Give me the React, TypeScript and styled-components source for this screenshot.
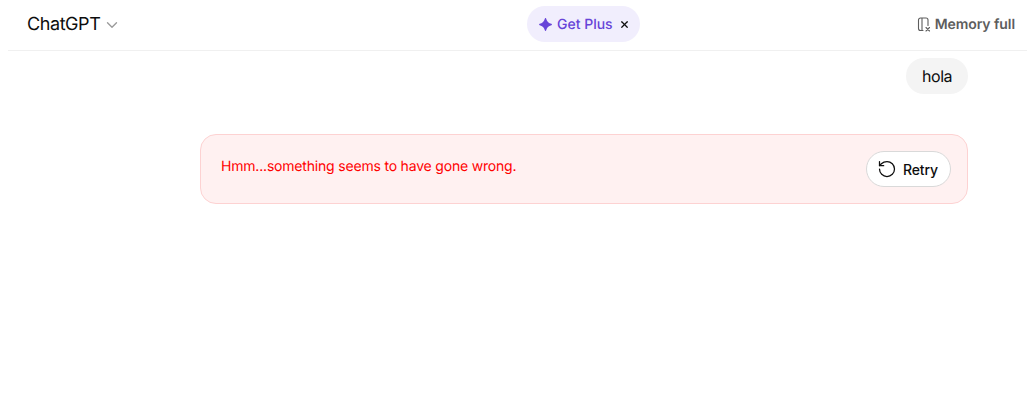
import React from 'react'
import styled, { createGlobalStyle } from 'styled-components'
import { ChevronDown, RotateCcw, X } from 'lucide-react'

const GlobalStyle = createGlobalStyle`
html, body {
  margin: 0;
  padding: 0;
  background: #ffffff;
  font-family: Inter, "Liberation Sans", sans-serif;
  text-rendering: geometricPrecision;
}
`

const App = () => {
  return (
    <Page>
      <GlobalStyle />
      <Header>
        <ModelButton>
          <ModelName>ChatGPT</ModelName>
          <ChevronDown size={18} color="#9b9b9b" strokeWidth={1.8} />
        </ModelButton>
        <PlusPill>
          <svg width="13" height="13" viewBox="0 0 13 13" aria-hidden="true">
            <path
              d="M6.500 .8c.7 3 2 4.700 5.700 5.700-3.700 1-5 2.700-5.700 5.700-.7-3-2-4.700-5.700-5.700 3.700-1 5-2.700 5.700-5.700z"
              fill="#6744d8"
              stroke="#6744d8"
              strokeWidth="1.400"
              strokeLinejoin="round"
            />
          </svg>
          <PlusLabel>Get Plus</PlusLabel>
          <CloseIcon size={11} strokeWidth={2.6} color="#0d0d0d" />
        </PlusPill>
        <MemoryStatus>
          <svg width="14" height="15" viewBox="0 0 14 15" fill="none" aria-hidden="true">
            <path
              d="M6 13.500H3.500a2 2 0 0 1-2-2V3a2 2 0 0 1 2-2h5.500a2 2 0 0 1 2 2v5.500M5 1v12.500"
              stroke="#5d5d5d"
              strokeWidth="1.100"
              strokeLinecap="round"
            />
            <path d="M9 10.500l3.500 3.500M12.500 10.500L9 14" stroke="#5d5d5d" strokeWidth="1.100" strokeLinecap="round" />
          </svg>
          <MemoryLabel>Memory full</MemoryLabel>
        </MemoryStatus>
      </Header>
      <Thread>
        <UserBubble>hola</UserBubble>
        <ErrorCard>
          <ErrorText>Hmm...something seems to have gone wrong.</ErrorText>
          <RetryButton>
            <RotateCcw size={20} strokeWidth={1.5} color="#0d0d0d" />
            Retry
          </RetryButton>
        </ErrorCard>
      </Thread>
    </Page>
  )
}

export default App

const Page = styled.div`
width: 1027px;
height: 420px;
overflow: hidden;
background: #ffffff;
`

const Header = styled.header`
position: relative;
height: 50px;
margin-left: 8px;
padding: 0 12px 0 19px;
display: flex;
align-items: center;
justify-content: space-between;
border-bottom: 1px solid #f0f0f0;
`

const ModelButton = styled.div`
display: flex;
align-items: center;
gap: 3px;
`

const ModelName = styled.span`
font-size: 18px;
line-height: 24px;
letter-spacing: -0.42px;
color: #0d0d0d;
`

const PlusPill = styled.div`
position: absolute;
left: 519px;
top: 6px;
width: 113px;
height: 36px;
box-sizing: border-box;
padding-left: 12px;
border-radius: 18px;
background: #f1eefd;
display: flex;
align-items: center;
gap: 5px;
`

const PlusLabel = styled.span`
font-size: 14px;
font-weight: 500;
color: #6744d8;
`

const CloseIcon = styled(X)`
margin-left: 1px;
`

const MemoryStatus = styled.div`
display: flex;
align-items: center;
gap: 4px;
margin-top: -2px;
`

const MemoryLabel = styled.span`
font-size: 14px;
font-weight: 600;
letter-spacing: -0.08px;
color: #5d5d5d;
`

const Thread = styled.main`
width: 768px;
margin: 7px 0 0 200px;
display: flex;
flex-direction: column;
align-items: flex-end;
gap: 40px;
`

const UserBubble = styled.div`
height: 36px;
padding: 0 16px;
border-radius: 18px;
background: #f4f4f4;
display: flex;
align-items: center;
font-size: 16px;
letter-spacing: -0.5px;
color: #0d0d0d;
`

const ErrorCard = styled.div`
width: 100%;
height: 70px;
box-sizing: border-box;
padding: 16px 16px 16px 20px;
border: 1px solid #fdd2d2;
border-radius: 16px;
background: #fff1f1;
display: flex;
justify-content: space-between;
align-items: flex-start;
`

const ErrorText = styled.p`
margin: 6px 0 0;
font-size: 14px;
line-height: 20px;
letter-spacing: -0.19px;
color: #ff0000;
`

const RetryButton = styled.button`
height: 36px;
padding: 0 12px 0 10px;
border: 1px solid #d9d9d9;
border-radius: 18px;
background: #ffffff;
display: flex;
align-items: center;
gap: 6px;
font-family: inherit;
font-size: 14px;
font-weight: 500;
letter-spacing: -0.1px;
color: #0d0d0d;
`
